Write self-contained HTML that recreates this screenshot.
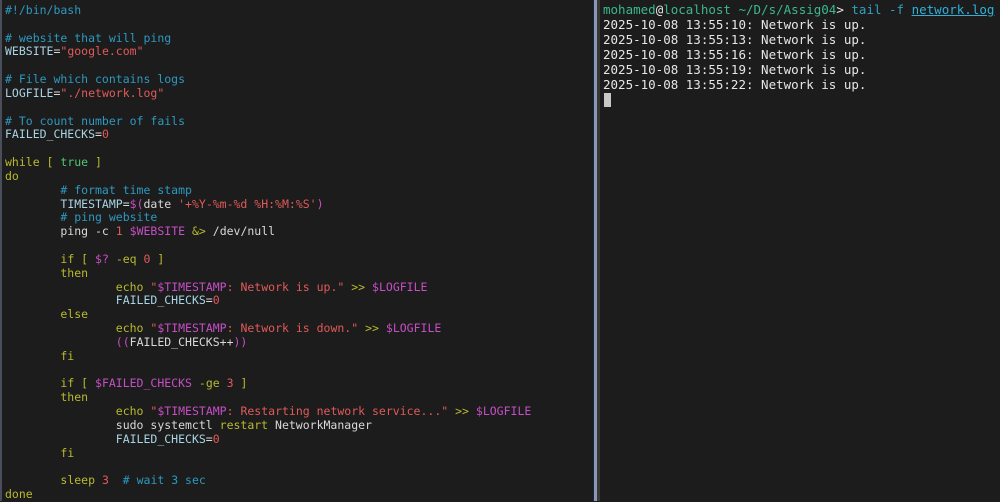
<!DOCTYPE html>
<html><head><style>
body{margin:0;width:1000px;height:501px;background:#1c1c1c;overflow:hidden;position:relative;font-family:"DejaVu Sans Mono","Liberation Mono",monospace}
#l{position:absolute;left:5px;top:4px;font-size:11.5px;line-height:13.83px;white-space:pre;color:#d8d8d8}
#r{position:absolute;left:603px;top:2px;font-size:12.5px;line-height:15px;white-space:pre;color:#e6e6e6}
.c{color:#2d98c0}.v{color:#a8d4e4}.s{color:#e05a5a}.k{color:#b9b92e}.g{color:#4cc870}.m{color:#c64ec6}.w{color:#e0e0e0}
#edge{position:absolute;left:0;top:0;width:2px;height:501px;background:#4a4e5a}
#d1{position:absolute;left:593px;top:0;width:1px;height:501px;background:#1a2640}
#d2{position:absolute;left:594px;top:0;width:3px;height:501px;background:#8898b8}
#d3{position:absolute;left:597px;top:0;width:3px;height:501px;background:#3a3834}
#cur{position:absolute;left:604px;top:93px;width:7px;height:14px;background:#c8c8c8}
.pg{color:#3cb88c}.pb{color:#2fa0c0}.u{color:#30b0d8;text-decoration:underline}
</style></head><body>
<div id="edge"></div><div id="d1"></div><div id="d2"></div><div id="d3"></div>
<div id="l"><span class="c">#!/bin/bash</span>

<span class="c"># website that will ping</span>
<span class="v">WEBSITE</span>=<span class="s">"google.com"</span>

<span class="c"># File which contains logs</span>
<span class="v">LOGFILE</span>=<span class="s">"./network.log"</span>

<span class="c"># To count number of fails</span>
<span class="v">FAILED_CHECKS</span>=<span class="s">0</span>

<span class="k">while [ </span><span class="g">true</span><span class="k"> ]</span>
<span class="k">do</span>
        <span class="c"># format time stamp</span>
        <span class="v">TIMESTAMP</span>=<span class="m">$(</span>date <span class="s">'+%Y-%m-%d %H:%M:%S'</span><span class="m">)</span>
        <span class="c"># ping website</span>
        ping -c <span class="s">1</span> <span class="m">$WEBSITE</span> <span class="k">&amp;&gt;</span> /dev/null

        <span class="k">if [ </span><span class="m">$?</span> <span class="k">-eq</span> <span class="s">0</span> <span class="k">]</span>
<span class="k">        then</span>
                <span class="k">echo</span> <span class="s">"</span><span class="m">$TIMESTAMP</span><span class="s">: Network is up."</span> <span class="k">&gt;&gt;</span> <span class="m">$LOGFILE</span>
                <span class="v">FAILED_CHECKS</span>=<span class="s">0</span>
<span class="k">        else</span>
                <span class="k">echo</span> <span class="s">"</span><span class="m">$TIMESTAMP</span><span class="s">: Network is down."</span> <span class="k">&gt;&gt;</span> <span class="m">$LOGFILE</span>
                <span class="m">((</span>FAILED_CHECKS++<span class="m">))</span>
<span class="k">        fi</span>

        <span class="k">if [ </span><span class="m">$FAILED_CHECKS</span> <span class="k">-ge</span> <span class="s">3</span> <span class="k">]</span>
<span class="k">        then</span>
                <span class="k">echo</span> <span class="s">"</span><span class="m">$TIMESTAMP</span><span class="s">: Restarting network service..."</span> <span class="k">&gt;&gt;</span> <span class="m">$LOGFILE</span>
                sudo systemctl <span class="k">restart</span> NetworkManager
                <span class="v">FAILED_CHECKS</span>=<span class="s">0</span>
<span class="k">        fi</span>

        <span class="k">sleep</span> <span class="s">3</span>  <span class="c"># wait 3 sec</span>
<span class="k">done</span></div>
<div id="r"><span class="pg">mohamed</span>@<span class="pg">localhost</span> <span class="pg">~/D/s/Assig04</span>&gt; <span class="pb">tail -f</span> <span class="u">network.log</span>
2025-10-08 13:55:10: Network is up.
2025-10-08 13:55:13: Network is up.
2025-10-08 13:55:16: Network is up.
2025-10-08 13:55:19: Network is up.
2025-10-08 13:55:22: Network is up.</div>
<div id="cur"></div>
</body></html>
